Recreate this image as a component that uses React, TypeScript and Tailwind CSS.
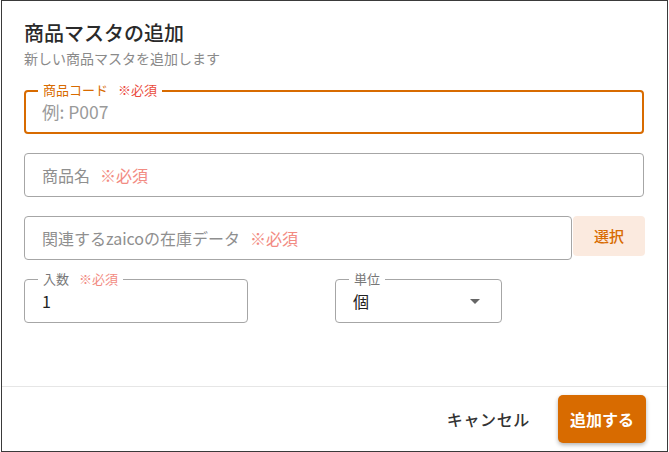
import { useState } from 'react';

const font = { fontFamily: '"Noto Sans CJK JP", "Noto Sans", sans-serif' };

function Required({ focused }: { focused?: boolean }) {
  return (
    <span className={`ml-[10px] ${focused ? 'text-[#ea4a3c]' : 'text-[#f28b82]'}`}>※必須</span>
  );
}

function OutlinedField({
  label,
  value,
  placeholder,
  focused,
  width,
  select,
  big,
}: {
  label?: React.ReactNode;
  value?: string;
  placeholder?: React.ReactNode;
  focused?: boolean;
  width: string;
  select?: boolean;
  big?: boolean;
}) {
  return (
    <div
      className={`relative h-[44px] rounded-[4px] flex items-center pr-[20px] ${width} ${
        focused ? 'border-2 border-[#d86b00] pl-[16px]' : 'border border-[#a6a6a6] pl-[17px]'
      }`}
    >
      {label && (
        <span
          className={`absolute bg-white px-[5px] text-[13px] leading-[16px] ${
            focused ? 'text-[#d86b00] left-[12px] top-[-10px]' : 'text-[#777] left-[13px] top-[-9px]'
          }`}
        >
          {label}
        </span>
      )}
      {value ? (
        <span className="text-[16px] text-[#222] flex-1">{value}</span>
      ) : (
        <span className={`${big ? 'text-[17.5px] text-[#9a9a9a]' : 'text-[16px] text-[#8f8f8f]'} flex-1`}>
          {placeholder}
        </span>
      )}
      {select && (
        <svg width="10" height="5" viewBox="0 0 10 5" className="mr-[1px]">
          <path d="M0 0 L10 0 L5 5 Z" fill="#666" />
        </svg>
      )}
    </div>
  );
}

export default function App() {
  const [code] = useState('');

  return (
    <div className="w-[669px] h-[452px] bg-white pl-px" style={font}>
      <div className="w-[667px] h-[452px] border border-[#3a3a3a] flex flex-col">
        <div className="px-[22px] pt-[18px] pb-[63px]">
          <h2 className="text-[20px] leading-[28px] font-medium text-[#2a2a2a]">商品マスタの追加</h2>
          <p className="mt-[1px] text-[14px] leading-[20px] text-[#8a8a8a]">新しい商品マスタを追加します</p>

          <div className="mt-[22px] flex flex-col gap-[19px]">
            <OutlinedField
              focused
              big
              width="w-[620px]"
              value={code}
              label={
                <>
                  商品コード
                  <Required focused />
                </>
              }
              placeholder="例: P007"
            />
            <OutlinedField
              width="w-[620px]"
              placeholder={
                <>
                  商品名
                  <Required />
                </>
              }
            />
            <div className="flex items-start">
              <OutlinedField
                width="w-[548px]"
                placeholder={
                  <>
                    関連するzaicoの在庫データ
                    <Required />
                  </>
                }
              />
              <button className="ml-px w-[72px] h-[40px] rounded-[4px] bg-[#fbeadf] text-[#d86b00] text-[15px] font-medium">
                選択
              </button>
            </div>
            <div className="flex items-start gap-[87px]">
              <OutlinedField
                width="w-[224px]"
                value="1"
                label={
                  <>
                    入数
                    <Required />
                  </>
                }
              />
              <OutlinedField width="w-[167px]" value="個" label="単位" select />
            </div>
          </div>
        </div>

        <div className="border-t border-[#e6e6e6] flex-1 flex items-center justify-end pr-[21px] gap-[12px]">
          <button className="h-[40px] px-[16px] text-[16px] font-medium tracking-[0.04em] text-[#333]">
            キャンセル
          </button>
          <button className="h-[48px] w-[88px] rounded-[5px] bg-[#d86b00] text-white text-[16px] font-bold shadow-[0_2px_4px_rgba(0,0,0,0.3)]">
            追加する
          </button>
        </div>
      </div>
    </div>
  );
}
